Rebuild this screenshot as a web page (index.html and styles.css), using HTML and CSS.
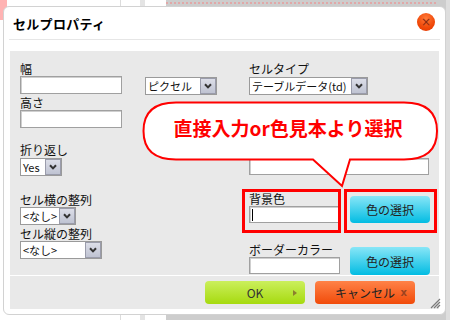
FILE: index.html
```html
<!DOCTYPE html>
<html lang="ja">
<head>
<meta charset="utf-8">
<title>セルプロパティ</title>
<link rel="stylesheet" href="styles.css">
</head>
<body>
<div class="backdrop">
  <div class="bd-left">
    <div class="bd-pink"></div>
    <div class="bd-space1"></div>
    <div class="bd-vline"></div>
    <div class="bd-space2"></div>
    <div class="bd-block"></div>
  </div>
  <div class="bd-right"><div class="bd-dots"></div></div>
  <div class="bd-edge"></div>
</div>

<div class="dialog">
  <div class="titlebar">
    <span class="title">セルプロパティ</span>
    <span class="close">×</span>
  </div>
  <div class="panel">
    <div class="col col-left">
      <div class="label">幅</div>
      <div class="inp w-left"></div>
      <div class="label mt2">高さ</div>
      <div class="inp w-left"></div>
      <div class="label mt15">折り返し</div>
      <div class="sel w-yes mt1"><span class="txt">Yes</span><span class="arr"><svg width="8" height="6" viewBox="0 0 8 6"><path d="M1 1.2 L4 4.4 L7 1.2" fill="none" stroke="#333" stroke-width="2"/></svg></span></div>
      <div class="label mt17">セル横の整列</div>
      <div class="sel w-yoko"><span class="txt">&lt;なし&gt;</span><span class="arr"><svg width="8" height="6" viewBox="0 0 8 6"><path d="M1 1.2 L4 4.4 L7 1.2" fill="none" stroke="#333" stroke-width="2"/></svg></span></div>
      <div class="label mt2">セル縦の整列</div>
      <div class="sel w-tate"><span class="txt">&lt;なし&gt;</span><span class="arr"><svg width="8" height="6" viewBox="0 0 8 6"><path d="M1 1.2 L4 4.4 L7 1.2" fill="none" stroke="#333" stroke-width="2"/></svg></span></div>
    </div>
    <div class="col col-mid">
      <div class="sel w-unit"><span class="txt">ピクセル</span><span class="arr"><svg width="8" height="6" viewBox="0 0 8 6"><path d="M1 1.2 L4 4.4 L7 1.2" fill="none" stroke="#333" stroke-width="2"/></svg></span></div>
    </div>
    <div class="col col-right">
      <div class="label">セルタイプ</div>
      <div class="sel w-type mt1"><span class="txt">テーブルデータ(td)</span><span class="arr"><svg width="8" height="6" viewBox="0 0 8 6"><path d="M1 1.2 L4 4.4 L7 1.2" fill="none" stroke="#333" stroke-width="2"/></svg></span></div>
      <div class="inp w-wide"></div>
      <div class="pair pair-bg">
        <div class="sub">
          <div class="label">背景色</div>
          <div class="inp w-color"><span class="caret"></span></div>
        </div>
        <button class="pick pick-bg">色の選択</button>
      </div>
      <div class="pair pair-border">
        <div class="sub">
          <div class="label">ボーダーカラー</div>
          <div class="inp w-color2"></div>
        </div>
        <button class="pick pick-border">色の選択</button>
      </div>
    </div>
  </div>
  <div class="foot">
    <button class="btn ok"><span></span><span class="btxt">OK</span><span class="tri"></span></button>
    <button class="btn cancel"><span></span><span class="btxt">キャンセル</span><span class="bx">x</span></button>
  </div>
  <svg class="grip" width="11" height="11" viewBox="0 0 11 11">
    <path d="M10 1 L1 10 M10 4 L4 10 M10 7 L7 10" stroke="#7a7a7a" stroke-width="1.2"/>
  </svg>
</div>

<div class="mark mark-a"></div>
<div class="mark mark-b"></div>

<svg class="callout" width="450" height="320" viewBox="0 0 450 320">
  <path d="M176 102.5 H404 Q437 102.5 437 131 Q437 159.5 404 159.5 H350 L342 186 L313 159.5 H176 Q143.5 159.5 143.5 131 Q143.5 102.5 176 102.5 Z" fill="#fff" stroke="#f00" stroke-width="2"/>
  <text x="288" y="136" text-anchor="middle" class="callout-text">直接入力or色見本より選択</text>
</svg>
</body>
</html>
```

FILE: styles.css
```css
body {
  margin: 0;
  width: 450px;
  height: 320px;
  overflow: hidden;
  position: relative;
  font-family: "Noto Sans CJK JP", "Noto Sans", sans-serif;
  color: #111;
  background: #fff;
}

/* backdrop page */
.backdrop {
  display: flex;
  height: 320px;
}
.bd-left {
  width: 166px;
  display: flex;
  background: #fff;
}
.bd-pink {
  width: 7px;
  height: 20px;
  background: #ffb3b3;
}
.bd-space1 { width: 113px; }
.bd-vline { width: 1px; background: #dcdcdc; }
.bd-space2 { width: 19px; }
.bd-block { width: 5px; background: #e4e4e4; }
.bd-right {
  flex: 1;
  background: #cdcdcd;
  padding-top: 2px;
}
.bd-dots {
  height: 0;
  border-top: 2px dotted #e1a8a8;
  margin-right: 10px;
}
.bd-edge {
  width: 4px;
  background: #dedede;
}

/* dialog */
.dialog {
  position: absolute;
  left: 3px;
  top: 6px;
  width: 443px;
  height: 309px;
  box-sizing: border-box;
  border: 1px solid #d2d2d2;
  border-radius: 6px;
  background: #fff;
  display: flex;
  flex-direction: column;
}
.titlebar {
  height: 33px;
  box-sizing: border-box;
  margin: 0 5px;
  padding: 0 5px 0 4px;
  border-bottom: 1px solid #e6e6e6;
  display: flex;
  align-items: center;
  justify-content: space-between;
}
.title {
  font-size: 13px;
  font-weight: bold;
  color: #000;
  letter-spacing: 0.3px;
}
.close {
  width: 18px;
  height: 18px;
  margin-top: -3px;
  border-radius: 50%;
  background: radial-gradient(circle at 50% 30%, #ff7a3a, #f04808 60%, #e03400);
  color: #8a2a10;
  font-size: 12px;
  line-height: 18px;
  text-align: center;
  font-family: "DejaVu Sans", sans-serif;
}

.panel {
  margin: 11px 6px 0;
  height: 224px;
  box-sizing: border-box;
  background: #e9e9e9;
  display: flex;
  padding: 11px 0 0 10px;
}
.col { display: flex; flex-direction: column; align-items: flex-start; }
.col-left { width: 125px; }
.col-mid { width: 104px; padding-top: 15px; }
.col-right { flex: 1; }

.label {
  font-size: 12px;
  line-height: 14px;
  height: 14px;
  white-space: nowrap;
  color: #111;
}
.mt1 { margin-top: 1px; }
.mt2 { margin-top: 2px; }
.mt15 { margin-top: 15px; }
.mt17 { margin-top: 17px; }

.inp {
  box-sizing: border-box;
  height: 18px;
  background: #fff;
  border: 1px solid #a0a0a0;
  box-shadow: inset 1px 1px 0 #cfcfcf;
}
.w-left { width: 102px; }
.w-wide { width: 180px; height: 17px; margin-top: 63px; }
.w-color { width: 90px; height: 17px; }
.w-color2 { width: 91px; height: 17px; }
.caret {
  display: block;
  width: 1px;
  height: 12px;
  margin: 2px 0 0 2px;
  background: #000;
}

.sel {
  box-sizing: border-box;
  height: 18px;
  display: flex;
  background: #fff;
  border: 1px solid #9a9a9a;
  font-size: 11px;
  line-height: 16px;
}
.sel .txt {
  flex: 1;
  padding-left: 2px;
  white-space: nowrap;
  overflow: hidden;
}
.sel .arr {
  width: 16px;
  box-sizing: border-box;
  border: 1px solid #9a9cab;
  background: linear-gradient(#dcdee8, #bfc3d2);
  display: flex;
  align-items: center;
  justify-content: center;
}
.w-yes { width: 42px; }
.w-yoko { width: 56px; }
.w-tate { width: 82px; }
.w-unit { width: 72px; }
.w-type { width: 119px; }

.pair {
  display: flex;
  align-items: flex-start;
}
.pair-bg { margin-top: 17px; }
.pair-border { margin-top: 20px; }
.sub { width: 101px; }
.pick {
  width: 80px;
  height: 27px;
  padding: 0;
  border: none;
  border-radius: 4px;
  background: linear-gradient(#88e6f7, #02bce2);
  font-family: "Noto Sans CJK JP", sans-serif;
  font-size: 12px;
  color: #222;
}
.pick-bg { margin-top: 4px; }
.pick-border { margin-top: 4px; height: 28px; }

.foot {
  margin: 1px 6px 0;
  height: 33px;
  box-sizing: border-box;
  background: #e9e9e9;
  display: flex;
  justify-content: flex-end;
  align-items: flex-start;
  gap: 10px;
  padding: 5px 24px 0 0;
}
.btn {
  width: 100px;
  height: 23px;
  padding: 0 8px 0 8px;
  border: none;
  border-radius: 4px;
  display: grid;
  grid-template-columns: 1fr auto 1fr;
  align-items: center;
  font-family: "Noto Sans CJK JP", sans-serif;
  font-size: 12px;
  color: #333;
}
.ok { background: linear-gradient(#cbef5c, #a6da0f); }
.cancel { background: linear-gradient(#ff8247, #f14b0a); color: #222; }
.tri {
  justify-self: end;
  width: 0;
  height: 0;
  border-left: 4px solid #8c7f2e;
  border-top: 3.5px solid transparent;
  border-bottom: 3.5px solid transparent;
}
.bx {
  justify-self: end;
  color: #9c4320;
  font-family: "DejaVu Sans", sans-serif;
  font-size: 10px;
  font-weight: bold;
}
.grip {
  position: absolute;
  right: 4px;
  bottom: 5px;
}

/* annotations */
.mark {
  position: absolute;
  top: 189px;
  height: 44px;
  box-sizing: border-box;
  border: 3px solid #f00;
}
.mark-a { left: 242px; width: 99px; }
.mark-b { left: 344px; width: 93px; }

.callout {
  position: absolute;
  left: 0;
  top: 0;
  pointer-events: none;
}
.callout-text {
  font-family: "Noto Sans CJK JP", sans-serif;
  font-size: 19px;
  font-weight: bold;
  fill: #f00;
}
```
